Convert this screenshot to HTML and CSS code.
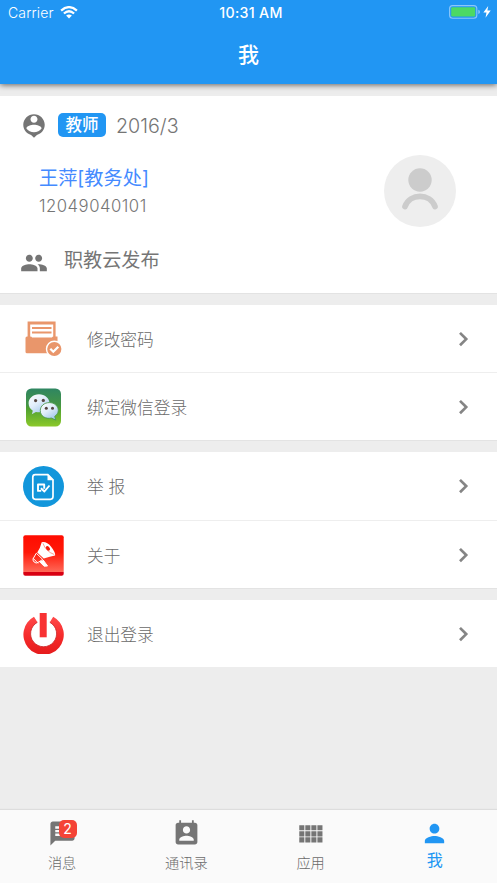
FILE: index.html
```html
<!DOCTYPE html>
<html lang="zh-CN">
<head>
<meta charset="utf-8">
<meta name="viewport" content="width=device-width, initial-scale=1">
<title>我</title>
<link rel="stylesheet" href="styles.css">
</head>
<body>
<div class="app">
  <header class="header">
    <div class="status">
      <div class="carrier"><span>Carrier</span>
        <svg width="18" height="13" viewBox="0 0 18 13" fill="none" stroke="#fff" stroke-width="2.3"><path d="M1.1 4.6Q9-2.3 16.9 4.6M3.9 7.5Q9 3.1 14.1 7.5"/><path d="M6.1 9.5Q9 7.3 11.9 9.5L9 12.4Z" fill="#fff" stroke="none"/></svg>
      </div>
      <div class="clock">10:31 AM</div>
      <div class="power">
        <svg width="42" height="15" viewBox="0 0 42 15"><rect x=".6" y=".6" width="27.2" height="12.6" rx="3" fill="none" stroke="#8cc7fa" stroke-width="1.1"/><rect x="2.2" y="2.3" width="24" height="9.2" rx="1.2" fill="#4cd964"/><path d="M29.3 4.8q1.7.6 1.7 2.1t-1.7 2.1z" fill="#8cc7fa"/><path d="M39.2 1 34.400 7.400h3.100l-1 5.400 5.200-7.200h-3.300z" fill="#fff"/></svg>
      </div>
    </div>
    <h1 class="title">我</h1>
  </header>

  <main class="content">
    <section class="card profile">
      <div class="term">
        <svg class="pin" width="28" height="28" viewBox="0 0 24 24" fill="#757575"><path d="M12 2C7.03 2 2.8 6.03 2.8 11c0 4.17 2.84 7.67 6.69 8.69L12 22l2.51-2.31c3.85-1.02 6.69-4.52 6.69-8.69C21.2 6.03 16.97 2 12 2zm0 1.3c1.66 0 3 1.34 3 3s-1.34 3-3 3-3-1.34-3-3 1.34-3 3-3zm0 14c-2.5 0-5.2-1.28-6.5-3.22.03-1.99 4-3.08 6.5-3.08s6.47 1.09 6.5 3.08c-1.3 1.94-4 3.22-6.5 3.22z"/></svg>
        <span class="role">教师</span>
        <span class="date">2016/3</span>
      </div>
      <div class="person">
        <div class="identity">
          <div class="name">王萍[教务处]</div>
          <div class="number">12049040101</div>
        </div>
        <svg class="avatar" width="72" height="72" viewBox="0 0 72 72"><circle cx="36" cy="36" r="36" fill="#eee"/><circle cx="36" cy="25" r="11.700" fill="#ccc"/><path d="M21 51.500C26 38 46 38 51 51.500" fill="none" stroke="#ccc" stroke-width="5.700" stroke-linecap="round"/></svg>
      </div>
      <div class="publish">
        <svg width="28" height="28" viewBox="0 0 24 24" fill="#757575"><path d="M16 11c1.66 0 2.99-1.34 2.99-3S17.66 5 16 5s-3 1.34-3 3 1.34 3 3 3zm-8 0c1.66 0 2.99-1.34 2.99-3S9.66 5 8 5 5 6.34 5 8s1.34 3 3 3zm0 2c-2.33 0-7 1.17-7 3.5V19h14v-2.500C15 14.170 10.330 13 8 13zm8 0c-.29 0-.62.02-.97.05 1.160.84 1.970 1.970 1.970 3.450V19h6v-2.500c0-2.330-4.670-3.500-7-3.500z"/></svg>
        <span>职教云发布</span>
      </div>
    </section>

    <section class="card group">
      <div class="row">
        <svg class="icon" width="41" height="41" viewBox="0 0 41 41"><path d="M4.600 3.500h28V19h-28z" fill="#e9966b"/><path d="M7.200 6.500h23V20h-23z" fill="#fff"/><path d="M9 10h19.500M9 14.600h19.500" stroke="#e9966b" stroke-width="2"/><path d="M4 18.500h3q2 0 2 1h20q0-1 2-1h3.500V35.300H4q-1.500 0-1.500-1.500V20q0-1.500 1.500-1.500z" fill="#e9966b"/><circle cx="31.300" cy="31" r="8.500" fill="#fff"/><circle cx="31.300" cy="31" r="7.100" fill="#e9966b"/><path d="m27.300 30.700 3 3 5-5" fill="none" stroke="#fff" stroke-width="2.300"/></svg>
        <span class="label">修改密码</span>
        <svg class="chevron" width="12" height="18" viewBox="0 0 12 18"><path d="m2 2.900 6.200 6.200L2 15.300"/></svg>
      </div>
      <div class="row">
        <svg class="icon" width="41" height="41" viewBox="0 0 41 41"><defs><linearGradient id="leaf" x2="0" y2="1"><stop stop-color="#2f8662"/><stop offset=".45" stop-color="#459544"/><stop offset=".5" stop-color="#4c9e32"/><stop offset="1" stop-color="#8bc92a"/></linearGradient><linearGradient id="bubble" x2=".7" y2="1"><stop stop-color="#fff"/><stop offset=".5" stop-color="#e0edfa"/><stop offset="1" stop-color="#9fc5ea"/></linearGradient></defs><rect x="3" y="1.500" width="35" height="38" rx="5.500" fill="url(#leaf)"/><path d="M16 7.300c-6 0-10.400 4-10.400 9 0 3.300 1.700 5.900 4.200 7.500l-1 3.400 4.100-2.200c8 1.700 13.600-2.900 13.600-8.700 0-5-4.600-9-10.500-9z" fill="url(#bubble)"/><path d="M26.300 15.600c-5 0-9 3.400-9 8 0 5.400 5 8.700 11.200 7.500l4.300 2-1.100-3.700c2-1.400 3.600-3.400 3.600-6 0-4.300-4-7.800-9-7.800z" fill="url(#bubble)" stroke="#4d9850" stroke-width=".9"/><g fill="#564640"><circle cx="12.600" cy="13.600" r="1.600"/><circle cx="20.300" cy="13.400" r="1.600"/><circle cx="23.300" cy="21.200" r="1.500"/><circle cx="29.500" cy="21.200" r="1.500"/></g></svg>
        <span class="label">绑定微信登录</span>
        <svg class="chevron" width="12" height="18" viewBox="0 0 12 18"><path d="m2 2.900 6.200 6.200L2 15.300"/></svg>
      </div>
    </section>

    <section class="card group help">
      <div class="row">
        <svg class="icon" width="41" height="41" viewBox="0 0 41 41"><circle cx="20.500" cy="20.500" r="20.500" fill="#1296db"/><path d="M12.200 8.600h12.600l5.200 5.200v16.800q0 2.700-2.700 2.700H12.500q-2.700 0-2.700-2.700V11.200q0-2.600 2.400-2.600z" fill="none" stroke="#fff" stroke-width="1.700"/><path d="M24.500 7.800v6.400h6.300z" fill="#fff"/><path d="M18.200 24.900H15v-6.400h6.200v4.200m-3.300-.5 3.500 3.300 5.100-6" fill="none" stroke="#fff" stroke-width="1.900" stroke-linejoin="round"/></svg>
        <span class="label">举 报</span>
        <svg class="chevron" width="12" height="18" viewBox="0 0 12 18"><path d="m2 2.900 6.200 6.200L2 15.300"/></svg>
      </div>
      <div class="row">
        <svg class="icon" width="41" height="41" viewBox="0 0 41 41"><defs><linearGradient id="alert" x2="0" y2="1"><stop stop-color="#ff0c00"/><stop offset=".42" stop-color="#ff1808"/><stop offset=".91" stop-color="#ff6958"/><stop offset=".92" stop-color="#d80012"/><stop offset="1" stop-color="#d80012"/></linearGradient></defs><rect x=".3" y=".3" width="40.400" height="40.400" rx="2" fill="url(#alert)"/><path d="M18.700 7.200q5-1 9.400 4.500t4 8.700q-5 1.200-11.300 3L14.200 17.500q3.200-4.700 4.500-10.300z" fill="#fff"/><path d="M20 8.300q2.700 8 11.200 11.200" fill="none" stroke="#ff715e" stroke-width=".7"/><ellipse cx="24.900" cy="13.400" rx="1.700" ry="2.600" transform="rotate(-42 24.900 13.400)" fill="#f51b0c"/><path d="m13.300 18.200 6.400 6.200-4.400 2.900q-2.200 1.700-4.200-.3t-.7-3.800z" fill="none" stroke="#fff" stroke-width="1"/><path d="m10.100 23.300 5 5M16.300 26.400l4.800 4.800 3.400-.2-4.300-6" fill="#fff" stroke="#fff"/></svg>
        <span class="label">关于</span>
        <svg class="chevron" width="12" height="18" viewBox="0 0 12 18"><path d="m2 2.900 6.200 6.200L2 15.300"/></svg>
      </div>
    </section>

    <section class="card group last">
      <div class="row">
        <svg class="icon" width="41" height="41" viewBox="0 0 41 41"><defs><linearGradient id="off" x2="0" y2="1"><stop stop-color="#ff494a"/><stop offset=".5" stop-color="#f62b2b"/><stop offset="1" stop-color="#e51b1c"/></linearGradient></defs><path d="M11 3.800A20.200 20.200 0 1 0 30.200 3.800L26.800 9.300A13 13 0 1 1 14.400 9.300Z" fill="url(#off)"/><path d="M16.700 0h7v24.300h-7z" fill="#f83233"/><path d="M14.400 9.300A13 13 0 1 0 26.800 9.300" fill="none" stroke="#c92225" stroke-width=".8"/></svg>
        <span class="label">退出登录</span>
        <svg class="chevron" width="12" height="18" viewBox="0 0 12 18"><path d="m2 2.900 6.200 6.200L2 15.300"/></svg>
      </div>
    </section>
  </main>

  <nav class="tabs">
    <div class="tab">
      <div class="tab-icon"><svg width="29" height="29" viewBox="0 0 24 24" fill="#757575"><path d="M20 2H4c-1.100 0-1.990.9-1.990 2L2 22l4-4h14c1.100 0 2-.9 2-2V4c0-1.100-.9-2-2-2zM6 6h12v2H6zm0 3h12v2H6zm8 5H6v-2h8z"/></svg><span class="badge">2</span></div>
      <span>消息</span>
    </div>
    <div class="tab">
      <div class="tab-icon"><svg width="29" height="29" viewBox="0 0 24 24" fill="#757575"><path d="M19 3h-1V1h-1.500v2h-9V1H6v2H5c-1.110 0-2 .9-2 2v14c0 1.100.89 2 2 2h14c1.100 0 2-.9 2-2V5c0-1.100-.9-2-2-2zm-7 3c1.660 0 3 1.340 3 3s-1.340 3-3 3-3-1.340-3-3 1.340-3 3-3zm6 12H6v-1c0-2 4-3.100 6-3.100s6 1.100 6 3.100v1z"/></svg></div>
      <span>通讯录</span>
    </div>
    <div class="tab">
      <div class="tab-icon"><svg width="29" height="29" viewBox="0 0 24 24" fill="#757575"><path d="M2.700 5.200h4.200v4.200H2.700zm5 0h4.200v4.200H7.700zm5 0h4.200v4.200h-4.200zm5 0h4.200v4.200h-4.200zM2.700 10.200h4.200v4.200H2.700zm5 0h4.200v4.200H7.700zm5 0h4.200v4.200h-4.200zm5 0h4.200v4.200h-4.200zM2.700 15.200h4.200v4.200H2.700zm5 0h4.200v4.200H7.700zm5 0h4.200v4.200h-4.200zm5 0h4.200v4.200h-4.200z"/></svg></div>
      <span>应用</span>
    </div>
    <div class="tab active">
      <div class="tab-icon"><svg width="29" height="29" viewBox="0 0 24 24" fill="#2196f3"><path d="M12 12c2.210 0 4-1.790 4-4s-1.790-4-4-4-4 1.790-4 4 1.790 4 4 4zm0 2c-2.670 0-8 1.340-8 4v2h16v-2c0-2.660-5.330-4-8-4z"/></svg></div>
      <span>我</span>
    </div>
  </nav>
</div>
</body>
</html>
```
FILE: styles.css
```css
* { box-sizing: border-box; }

body {
  margin: 0;
  background: #ededed;
  color: #757575;
  font-family: Inter, "Noto Sans CJK SC", sans-serif;
}

svg { display: block; flex: none; }

.app {
  display: flex;
  flex-direction: column;
  height: 883px;
  overflow: hidden;
}

.header {
  flex: none;
  height: 84px;
  background: #2196f3;
  color: #fff;
  box-shadow: 0 1px 6px rgba(0, 0, 0, .6);
}

.status {
  display: grid;
  grid-template-columns: 1fr auto 1fr;
  align-items: center;
  height: 25px;
  padding: 0 6px 0 8px;
  font-size: 14px;
}

.carrier { display: flex; align-items: center; gap: 6px; font-weight: 300; letter-spacing: .15px; }
.clock { font-weight: 500; font-size: 14.200px; letter-spacing: .3px; padding-left: 3px; }
.power { justify-self: end; }

.title {
  margin: 0;
  height: 59px;
  font-size: 21px;
  font-weight: 500;
  line-height: 59px;
  text-align: center;
}

.content {
  flex: 1;
  display: flex;
  flex-direction: column;
  gap: 12px;
  padding-top: 12px;
}

.card {
  flex: none;
  background: #fff;
  box-shadow: 0 1px 0 #e3e3e3;
}

.profile {
  height: 197px;
  display: flex;
  flex-direction: column;
}

.term {
  display: flex;
  align-items: center;
  height: 59px;
  padding-left: 20px;
}

.role {
  margin: -1px 10px 0;
  width: 48px;
  height: 24px;
  border-radius: 5px;
  background: #2196f3;
  color: #fff;
  font-size: 16.500px;
  font-weight: 500;
  line-height: 24px;
  text-align: center;
}

.date { font-size: 19.700px; font-weight: 300; padding-top: 1px; }

.person {
  display: flex;
  justify-content: space-between;
  height: 72px;
  padding: 0 41px 0 39px;
}

.name { color: #448aff; font-size: 19.200px; line-height: 28px; padding-top: 9px; }
.number { font-size: 16.700px; font-weight: 300; letter-spacing: .5px; line-height: 29px; }

.publish {
  display: flex;
  align-items: center;
  height: 63px;
  padding-left: 20px;
  gap: 16px;
  font-size: 19.100px;
}

.publish svg { margin-top: 9px; }

.row {
  display: flex;
  align-items: center;
  height: 67px;
  padding: 0 27px 0 23px;
}

.row + .row { height: 68px; border-top: 1px solid #eee; padding-top: 1px; }
.group { height: 135px; }
.help { height: 136px; }
.help .row { height: 68px; }
.last { height: 67px; box-shadow: none; }

.label {
  flex: 1;
  margin-left: 23px;
  font-size: 16.700px;
  font-weight: 300;
  color: #6a6a6a;
}

.chevron { fill: none; stroke: #858585; stroke-width: 2.700; }

.tabs {
  flex: none;
  display: grid;
  grid-template-columns: repeat(4, 1fr);
  height: 73px;
  background: #fafafa;
  box-shadow: 0 -1px 1px #ddd;
  color: #6a6a6a;
  font-size: 14.200px;
  font-weight: 300;
}

.tab {
  display: flex;
  flex-direction: column;
  align-items: center;
  padding-top: 9px;
}

.tab span { line-height: 29px; }
.tab-icon { position: relative; height: 29px; }

.tab-icon .badge {
  position: absolute;
  left: 11px;
  top: 1px;
  width: 18px;
  height: 18px;
  border-radius: 5px;
  background: #f44336;
  color: #fff;
  font-size: 14px;
  font-weight: 400;
  line-height: 18px;
  text-align: center;
}

.active { color: #2196f3; font-size: 16px; font-weight: 400; }
.active span { line-height: 25px; }
```
